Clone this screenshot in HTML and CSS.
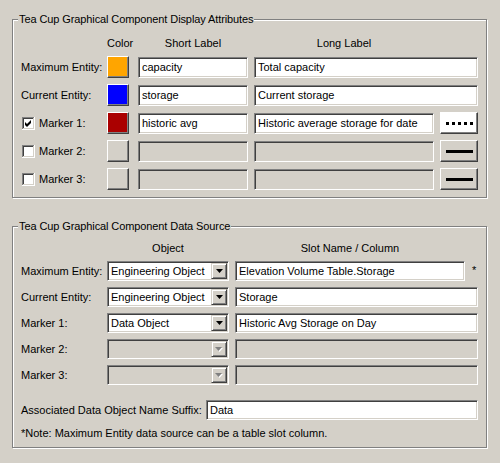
FILE: index.html
```html
<!DOCTYPE html>
<html>
<head>
<meta charset="utf-8">
<link rel="stylesheet" href="styles.css">
</head>
<body>
<fieldset class="group g1">
  <legend>Tea Cup Graphical Component Display Attributes</legend>
  <div class="grid1">
    <div></div>
    <div class="hdr left">Color</div>
    <div class="hdr">Short Label</div>
    <div class="hdr">Long Label</div>
    <div></div>

    <div class="lbl">Maximum Entity:</div>
    <div class="cbtn" style="background:#ffa500"></div>
    <div class="entry e1">capacity</div>
    <div class="entry e1 span2">Total capacity</div>

    <div class="lbl">Current Entity:</div>
    <div class="cbtn" style="background:#0000ff"></div>
    <div class="entry e1">storage</div>
    <div class="entry e1 span2">Current storage</div>

    <div class="lbl chk">
      <svg class="box" width="13" height="13" viewBox="0 0 13 13"><rect x="0" y="0" width="13" height="13" fill="#fff"/><rect x="0" y="0" width="12" height="1" fill="#808080"/><rect x="0" y="0" width="1" height="12" fill="#808080"/><rect x="1" y="1" width="10" height="1" fill="#404040"/><rect x="1" y="1" width="1" height="10" fill="#404040"/><rect x="1" y="11" width="11" height="1" fill="#d4d0c8"/><rect x="11" y="1" width="1" height="11" fill="#d4d0c8"/><path d="M3 5 L5 7 L9 3 L9 6 L5 10 L3 8 Z" fill="#000"/></svg>
      <span>Marker 1:</span>
    </div>
    <div class="cbtn" style="background:#aa0000"></div>
    <div class="entry e1">historic avg</div>
    <div class="entry e1">Historic average storage for date</div>
    <div class="lbtn white"><span class="dots"></span></div>

    <div class="lbl chk">
      <svg class="box" width="13" height="13" viewBox="0 0 13 13"><rect x="0" y="0" width="13" height="13" fill="#fff"/><rect x="0" y="0" width="12" height="1" fill="#808080"/><rect x="0" y="0" width="1" height="12" fill="#808080"/><rect x="1" y="1" width="10" height="1" fill="#404040"/><rect x="1" y="1" width="1" height="10" fill="#404040"/><rect x="1" y="11" width="11" height="1" fill="#d4d0c8"/><rect x="11" y="1" width="1" height="11" fill="#d4d0c8"/></svg>
      <span>Marker 2:</span>
    </div>
    <div class="cbtn"></div>
    <div class="entry e1 dis"></div>
    <div class="entry e1 dis"></div>
    <div class="lbtn"><span class="solid"></span></div>

    <div class="lbl chk">
      <svg class="box" width="13" height="13" viewBox="0 0 13 13"><rect x="0" y="0" width="13" height="13" fill="#fff"/><rect x="0" y="0" width="12" height="1" fill="#808080"/><rect x="0" y="0" width="1" height="12" fill="#808080"/><rect x="1" y="1" width="10" height="1" fill="#404040"/><rect x="1" y="1" width="1" height="10" fill="#404040"/><rect x="1" y="11" width="11" height="1" fill="#d4d0c8"/><rect x="11" y="1" width="1" height="11" fill="#d4d0c8"/></svg>
      <span>Marker 3:</span>
    </div>
    <div class="cbtn"></div>
    <div class="entry e1 dis"></div>
    <div class="entry e1 dis"></div>
    <div class="lbtn"><span class="solid"></span></div>
  </div>
</fieldset>

<fieldset class="group g2">
  <legend>Tea Cup Graphical Component Data Source</legend>
  <div class="grid2">
    <div></div>
    <div class="hdr">Object</div>
    <div class="hdr">Slot Name / Column</div>
    <div></div>

    <div class="lbl">Maximum Entity:</div>
    <div class="combo"><span class="ctext">Engineering Object</span><span class="arrow"><svg width="7" height="4" viewBox="0 0 7 4"><path d="M0 0 H7 L3.5 4 Z" fill="#000"/></svg></span></div>
    <div class="entry e2">Elevation Volume Table.Storage</div>
    <div class="star">*</div>

    <div class="lbl">Current Entity:</div>
    <div class="combo"><span class="ctext">Engineering Object</span><span class="arrow"><svg width="7" height="4" viewBox="0 0 7 4"><path d="M0 0 H7 L3.5 4 Z" fill="#000"/></svg></span></div>
    <div class="entry e2 span2">Storage</div>

    <div class="lbl">Marker 1:</div>
    <div class="combo"><span class="ctext">Data Object</span><span class="arrow"><svg width="7" height="4" viewBox="0 0 7 4"><path d="M0 0 H7 L3.5 4 Z" fill="#000"/></svg></span></div>
    <div class="entry e2 span2">Historic Avg Storage on Day</div>

    <div class="lbl">Marker 2:</div>
    <div class="combo dis"><span class="ctext"></span><span class="arrow"><svg width="8" height="5" viewBox="0 0 8 5"><path d="M1 1 H8 L4.5 5 Z" fill="#fff"/><path d="M0 0 H7 L3.5 4 Z" fill="#808080"/></svg></span></div>
    <div class="entry e2 span2 dis"></div>

    <div class="lbl">Marker 3:</div>
    <div class="combo dis"><span class="ctext"></span><span class="arrow"><svg width="8" height="5" viewBox="0 0 8 5"><path d="M1 1 H8 L4.5 5 Z" fill="#fff"/><path d="M0 0 H7 L3.5 4 Z" fill="#808080"/></svg></span></div>
    <div class="entry e2 span2 dis"></div>
  </div>
  <div class="suffix">
    <span class="slbl">Associated Data Object Name Suffix:</span>
    <div class="entry e2 sentry">Data</div>
  </div>
  <div class="note">*Note: Maximum Entity data source can be a table slot column.</div>
</fieldset>
</body>
</html>
```

FILE: styles.css
```css
html, body {
  margin: 0;
  padding: 0;
}
body {
  background: #d4d0c8;
  font-family: "Liberation Sans", Arial, sans-serif;
  font-size: 11px;
  color: #000;
  width: 500px;
  height: 463px;
  overflow: hidden;
}
.group {
  box-sizing: border-box;
  width: 475px;
  margin: 0 0 0 12px;
  border: 1px solid #808080;
  box-shadow: 1px 1px 0 #fff, inset 1px 1px 0 #fff;
  padding: 0 0 0 8px;
  min-inline-size: 0;
}
.g1 {
  margin-top: 12px;
  padding-top: 10px;
  padding-bottom: 7px;
}
.g2 {
  margin-top: 21px;
  padding-top: 8px;
  padding-bottom: 7px;
}
legend {
  padding: 0 1px;
  margin-left: -3px;
  line-height: 14px;
  background: #d4d0c8;
  letter-spacing: -0.1px;
}
.grid1 {
  display: grid;
  grid-template-columns: 80px 25px 110px 180px 38px;
  grid-template-rows: 14px repeat(5, 22px);
  column-gap: 6px;
  row-gap: 6px;
  align-items: center;
}
.grid2 {
  display: grid;
  grid-template-columns: 80px 122px 230px 7px;
  grid-template-rows: 14px repeat(5, 20px);
  column-gap: 6px;
  row-gap: 6px;
  align-items: center;
}
.hdr {
  text-align: center;
  line-height: 14px;
  white-space: nowrap;
}
.hdr.left {
  text-align: left;
}
.lbl {
  white-space: nowrap;
  line-height: 14px;
}
.chk {
  display: flex;
  align-items: center;
  gap: 4px;
  padding-left: 1px;
}
.box {
  display: block;
  flex: none;
}
.span2 {
  grid-column: span 2;
}
.cbtn {
  box-sizing: border-box;
  width: 22px;
  height: 22px;
  border: 1px solid;
  border-color: #fff #404040 #404040 #fff;
  box-shadow: inset -1px -1px 0 #808080;
  background: #d4d0c8;
}
.entry {
  box-sizing: border-box;
  border: 1px solid;
  border-color: #808080 #fff #fff #808080;
  box-shadow: inset 1px 1px 0 #404040, inset -1px -1px 0 #d4d0c8;
  background: #fff;
  padding: 0 3px;
  display: flex;
  align-items: center;
  white-space: nowrap;
  overflow: hidden;
}
.entry.dis {
  background: #d4d0c8;
}
.e1 {
  height: 21px;
}
.e2 {
  height: 20px;
}
.lbtn {
  box-sizing: border-box;
  width: 38px;
  height: 22px;
  border: 1px solid;
  border-color: #fff #404040 #404040 #fff;
  box-shadow: inset -1px -1px 0 #808080;
  background: #d4d0c8;
  display: flex;
  align-items: center;
  justify-content: center;
}
.lbtn.white {
  background: #fff;
}
.dots {
  display: block;
  width: 27px;
  height: 3px;
  background: repeating-linear-gradient(90deg, #000 0 3px, transparent 3px 6px);
}
.solid {
  display: block;
  width: 27px;
  height: 3px;
  background: #000;
}
.combo {
  box-sizing: border-box;
  height: 20px;
  border: 1px solid;
  border-color: #808080 #fff #fff #808080;
  box-shadow: inset 1px 1px 0 #404040, inset -1px -1px 0 #d4d0c8;
  background: #fff;
  padding: 1px 1px 1px 3px;
  display: flex;
  align-items: center;
}
.combo.dis {
  background: #d4d0c8;
}
.ctext {
  flex: 1;
  white-space: nowrap;
  overflow: hidden;
}
.arrow {
  box-sizing: border-box;
  width: 16px;
  height: 16px;
  flex: none;
  border: 1px solid;
  border-color: #d4d0c8 #404040 #404040 #d4d0c8;
  box-shadow: inset 1px 1px 0 #fff, inset -1px -1px 0 #808080;
  background: #d4d0c8;
  display: flex;
  align-items: center;
  justify-content: center;
}
.arrow svg {
  display: block;
}
.star {
  line-height: 14px;
  padding-left: 1px;
  margin-top: -2px;
}
.suffix {
  display: flex;
  align-items: center;
  margin-top: 15px;
  padding-right: 8px;
}
.slbl {
  width: 185px;
  flex: none;
  white-space: nowrap;
}
.sentry {
  width: 272px;
}
.note {
  margin-top: 6px;
  line-height: 14px;
  white-space: nowrap;
}
```
